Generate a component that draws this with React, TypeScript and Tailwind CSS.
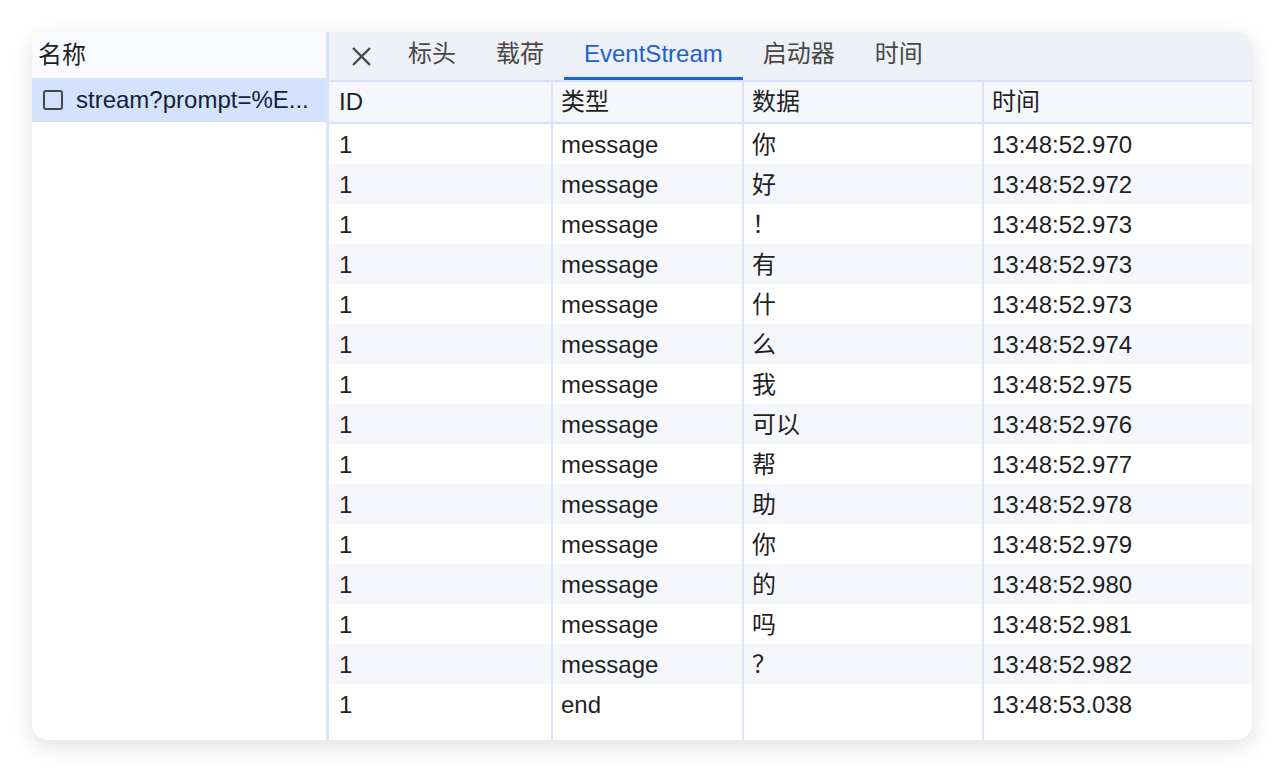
import React from 'react';

const rows: [string, string, string, string][] = [
  ['1', 'message', '你', '13:48:52.970'],
  ['1', 'message', '好', '13:48:52.972'],
  ['1', 'message', '！', '13:48:52.973'],
  ['1', 'message', '有', '13:48:52.973'],
  ['1', 'message', '什', '13:48:52.973'],
  ['1', 'message', '么', '13:48:52.974'],
  ['1', 'message', '我', '13:48:52.975'],
  ['1', 'message', '可以', '13:48:52.976'],
  ['1', 'message', '帮', '13:48:52.977'],
  ['1', 'message', '助', '13:48:52.978'],
  ['1', 'message', '你', '13:48:52.979'],
  ['1', 'message', '的', '13:48:52.980'],
  ['1', 'message', '吗', '13:48:52.981'],
  ['1', 'message', '？', '13:48:52.982'],
  ['1', 'end', '', '13:48:53.038'],
];

const tabs = ['标头', '载荷', 'EventStream', '启动器', '时间'];

const cols = 'grid grid-cols-[224px_191px_240px_1fr]';
const cell = 'border-r-2 border-[#dbe5f9]';

export default function App() {
  return (
    <div className="min-h-screen bg-white p-8 font-['Liberation_Sans','Noto_Sans_CJK_SC',sans-serif] text-[24px] text-[#1f1f1f]">
      <div className="flex h-[708px] w-[1220px] overflow-hidden rounded-2xl bg-white shadow-[0_6px_22px_rgba(0,0,0,0.13)]">
        {/* left: request list */}
        <div className="flex w-[294px] flex-col">
          <div className="flex h-[46px] items-center bg-[#f9fafd] pl-[6px]">名称</div>
          <div className="flex h-[44px] items-center bg-[#d3e3fd] pl-[11px] text-[#16213b]">
            <span className="h-[20px] w-[20px] shrink-0 rounded-[3px] border-2 border-[#474747]" />
            <span className="ml-[13px] overflow-hidden whitespace-nowrap">stream?prompt=%E...</span>
          </div>
        </div>
        <div className="w-[3px] bg-[#d9e4fb]" />

        {/* right: detail */}
        <div className="flex flex-1 flex-col">
          <div className="flex h-[48px] items-stretch bg-[#eef0f7] text-[#474747]">
            <div className="flex items-center pl-[21px] pr-[15px]">
              <svg width="23" height="23" viewBox="0 0 24 24" fill="none" stroke="#474747" strokeWidth="2.4" strokeLinecap="square">
                <path d="M4 4 L20 20 M20 4 L4 20" />
              </svg>
            </div>
            {tabs.map(t => (
              <div
                key={t}
                className={
                  t === 'EventStream'
                    ? 'flex items-center border-b-[3px] border-[#1b66d6] px-5 pb-[2px] text-[#1b62cf]'
                    : 'flex items-center border-b-[3px] border-transparent px-5 pb-[2px]'
                }
              >
                {t}
              </div>
            ))}
          </div>
          <div className="h-[2px] bg-[#d6e2fb]" />

          <div className={`${cols} h-[42px] border-b-2 border-[#d6e2fb] bg-[#f6f7fc]`}>
            <div className={`${cell} flex items-center pl-[10px]`}>ID</div>
            <div className={`${cell} flex items-center pl-2`}>类型</div>
            <div className={`${cell} flex items-center pl-2`}>数据</div>
            <div className="flex items-center pl-2">时间</div>
          </div>

          {rows.map((r, i) => (
            <div key={i} className={`${cols} h-[40px] ${i % 2 === 1 ? 'bg-[#f6f7fd]' : 'bg-white'}`}>
              <div className={`${cell} flex items-center pl-[10px] pt-[2px]`}>{r[0]}</div>
              <div className={`${cell} flex items-center pl-2 pt-[2px]`}>{r[1]}</div>
              <div className={`${cell} flex items-center pl-2 pt-[2px]`}>{r[2]}</div>
              <div className="flex items-center pl-2 pt-[2px]">{r[3]}</div>
            </div>
          ))}

          <div className={`${cols} flex-1`}>
            <div className={cell} />
            <div className={cell} />
            <div className={cell} />
            <div />
          </div>
        </div>
      </div>
    </div>
  );
}
